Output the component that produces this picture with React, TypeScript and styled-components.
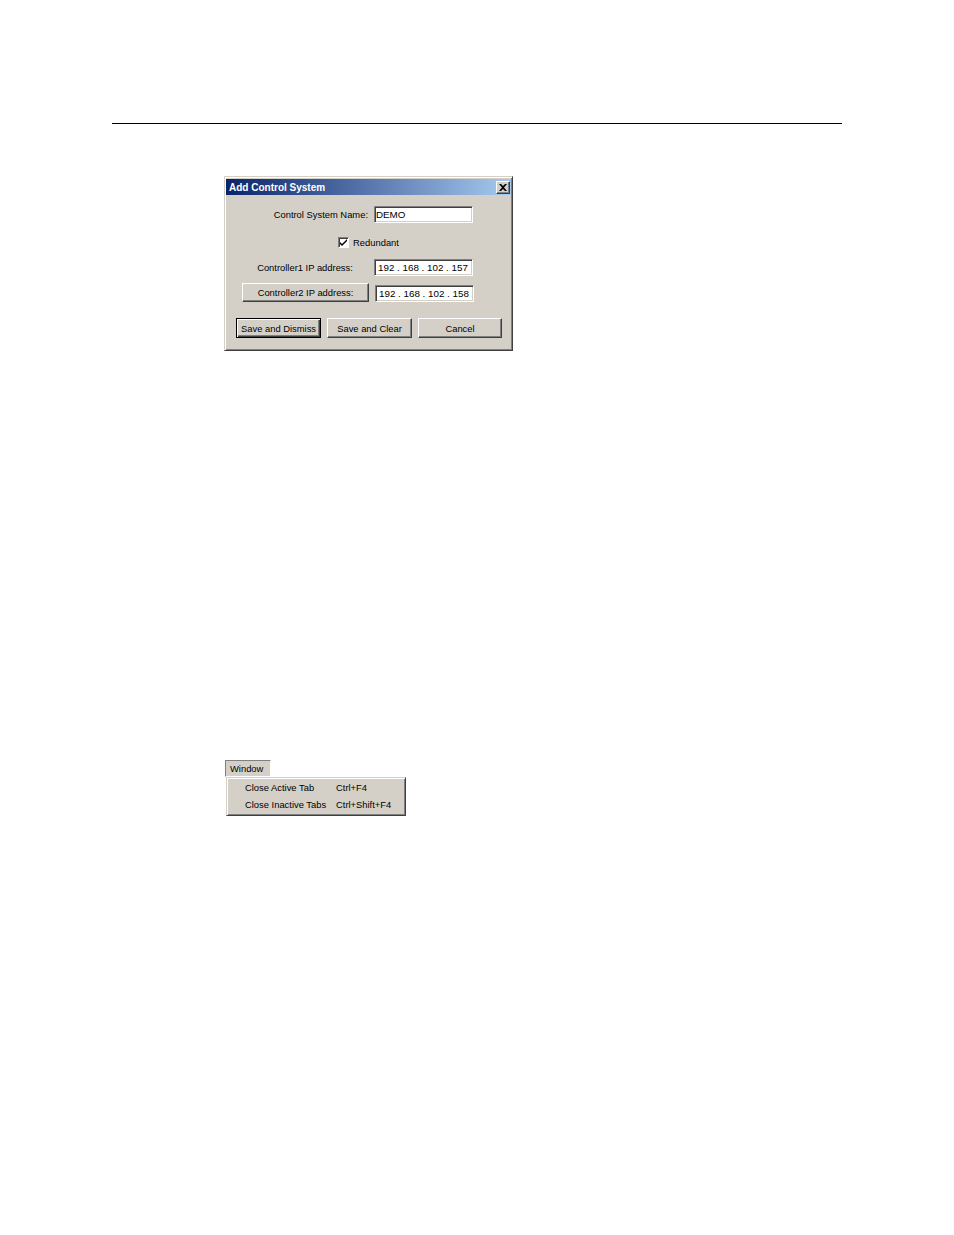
import React from "react";
import styled, { createGlobalStyle } from "styled-components";

const GlobalStyle = createGlobalStyle`
  html, body {
    margin: 0;
    padding: 0;
    background: #fff;
  }
  body {
    font-family: "Liberation Sans", Arial, sans-serif;
  }
`;

const face = "#d4d0c8";
const uiFont = `"Liberation Sans", Arial, sans-serif`;

const Page = styled.div`
  width: 954px;
  height: 1235px;
  padding-top: 123px;
  box-sizing: border-box;
`;

const Rule = styled.div`
  margin-left: 112px;
  width: 730px;
  border-top: 1px solid #000;
`;

const Dialog = styled.div`
  margin: 52px 0 0 224px;
  width: 289px;
  height: 175px;
  box-sizing: border-box;
  background: ${face};
  border: 1px solid;
  border-color: ${face} #404040 #404040 ${face};
  box-shadow: inset 1px 1px #fff, inset -1px -1px #808080;
  padding: 2px 1px 0 1px;
  font-family: ${uiFont};
  font-size: 9.4px;
  color: #000;
`;

const TitleBar = styled.div`
  height: 16px;
  display: flex;
  align-items: center;
  justify-content: space-between;
  padding: 0 1px 0 3px;
  background: linear-gradient(to right, #0a246a, #a6caf0);
`;

const TitleText = styled.span`
  color: #fff;
  font-weight: bold;
  font-size: 10px;
`;

const CloseBox = styled.div`
  width: 14px;
  height: 13px;
  box-sizing: border-box;
  background: ${face};
  border: 1px solid;
  border-color: #fff #404040 #404040 #fff;
  box-shadow: inset -1px -1px #808080;
  display: flex;
  align-items: center;
  justify-content: center;
`;

const Content = styled.div`
  display: flex;
  flex-direction: column;
`;

const FieldRow = styled.div<{ $top: number; $h: number }>`
  display: flex;
  align-items: center;
  margin-top: ${(p) => p.$top}px;
  height: ${(p) => p.$h}px;
  padding-left: 16px;
  gap: 6px;
`;

const LabelCell = styled.div<{ $align: "flex-end" | "center" }>`
  width: 126px;
  display: flex;
  justify-content: ${(p) => p.$align};
  white-space: nowrap;
`;

const Field = styled.div<{ $pad?: number; $shift?: number }>`
  width: 99px;
  height: 17px;
  margin-top: ${(p) => p.$shift ?? 0}px;
  box-sizing: border-box;
  background: #fff;
  border: 1px solid;
  border-color: #808080 #fff #fff #808080;
  box-shadow: inset 1px 1px #404040, inset -1px -1px ${face};
  padding: 0 3px 0 ${(p) => p.$pad ?? 3}px;
  display: flex;
  align-items: center;
  white-space: pre;
  font-size: 9.8px;
`;

const CheckRow = styled.div`
  margin-top: 13px;
  height: 12px;
  display: flex;
  align-items: center;
  justify-content: center;
  gap: 4px;
`;

const CheckBox = styled.div`
  width: 11px;
  height: 11px;
  box-sizing: border-box;
  background: #fff;
  border: 1px solid;
  border-color: #808080 #fff #fff #808080;
  box-shadow: inset 1px 1px #404040;
  display: flex;
  align-items: center;
  justify-content: center;
`;

const Button = styled.div<{ $w: number; $default?: boolean }>`
  width: ${(p) => p.$w}px;
  height: 100%;
  box-sizing: border-box;
  background: ${face};
  border: 1px solid;
  border-color: ${(p) => (p.$default ? "#000" : "#fff #404040 #404040 #fff")};
  box-shadow: ${(p) =>
    p.$default
      ? "inset 1px 1px #fff, inset -1px -1px #404040, inset -2px -2px #808080"
      : "inset -1px -1px #808080"};
  display: flex;
  align-items: center;
  justify-content: center;
  white-space: nowrap;
`;

const ButtonRow = styled.div`
  margin-top: 16px;
  height: 20px;
  display: flex;
  gap: 6px;
  padding-left: 10px;
`;

const MenuArea = styled.div`
  margin: 409px 0 0 225px;
  font-family: ${uiFont};
  font-size: 9.4px;
  color: #000;
`;

const MenuTab = styled.div`
  width: 46px;
  height: 17px;
  box-sizing: border-box;
  background: ${face};
  border: 1px solid;
  border-color: #808080 #fff #fff #808080;
  display: flex;
  align-items: center;
  padding-left: 4px;
`;

const Dropdown = styled.div`
  margin-left: 1px;
  width: 180px;
  height: 39px;
  box-sizing: border-box;
  background: ${face};
  border: 1px solid;
  border-color: ${face} #404040 #404040 ${face};
  box-shadow: inset 1px 1px #fff, inset -1px -1px #808080;
  padding: 1px 2px;
`;

const MenuItem = styled.div`
  height: 17px;
  display: flex;
  align-items: center;
  padding-left: 16px;
  white-space: nowrap;
`;

const ItemLabel = styled.span`
  width: 91px;
`;

const App = () => {
  return (
    <>
      <GlobalStyle />
      <Page>
        <Rule />
        <Dialog>
          <TitleBar>
            <TitleText>Add Control System</TitleText>
            <CloseBox>
              <svg width="8" height="7" viewBox="0 0 8 7">
                <path d="M0 0h2l2 2 2-2h2L5 3.5 8 7H6L4 5 2 7H0l3-3.5z" fill="#000" />
              </svg>
            </CloseBox>
          </TitleBar>
          <Content>
            <FieldRow $top={11} $h={17}>
              <LabelCell $align="flex-end">Control System Name:</LabelCell>
              <Field $pad={1}>DEMO</Field>
            </FieldRow>
            <CheckRow>
              <CheckBox>
                <svg width="7" height="7" viewBox="0 0 7 7">
                  <path d="M0 3l2 2 5-5v2L2 7 0 5z" fill="#000" />
                </svg>
              </CheckBox>
              <span>Redundant</span>
            </CheckRow>
            <FieldRow $top={11} $h={17}>
              <LabelCell $align="center">Controller1 IP address:</LabelCell>
              <Field>192 . 168 . 102 . 157</Field>
            </FieldRow>
            <FieldRow $top={7} $h={19}>
              <Button $w={127}>Controller2 IP address:</Button>
              <Field $shift={2}>192 . 168 . 102 . 158</Field>
            </FieldRow>
            <ButtonRow>
              <Button $w={85} $default>Save and Dismiss</Button>
              <Button $w={85}>Save and Clear</Button>
              <Button $w={84}>Cancel</Button>
            </ButtonRow>
          </Content>
        </Dialog>
        <MenuArea>
          <MenuTab>Window</MenuTab>
          <Dropdown>
            <MenuItem>
              <ItemLabel>Close Active Tab</ItemLabel>
              <span>Ctrl+F4</span>
            </MenuItem>
            <MenuItem>
              <ItemLabel>Close Inactive Tabs</ItemLabel>
              <span>Ctrl+Shift+F4</span>
            </MenuItem>
          </Dropdown>
        </MenuArea>
      </Page>
    </>
  );
};

export default App;
